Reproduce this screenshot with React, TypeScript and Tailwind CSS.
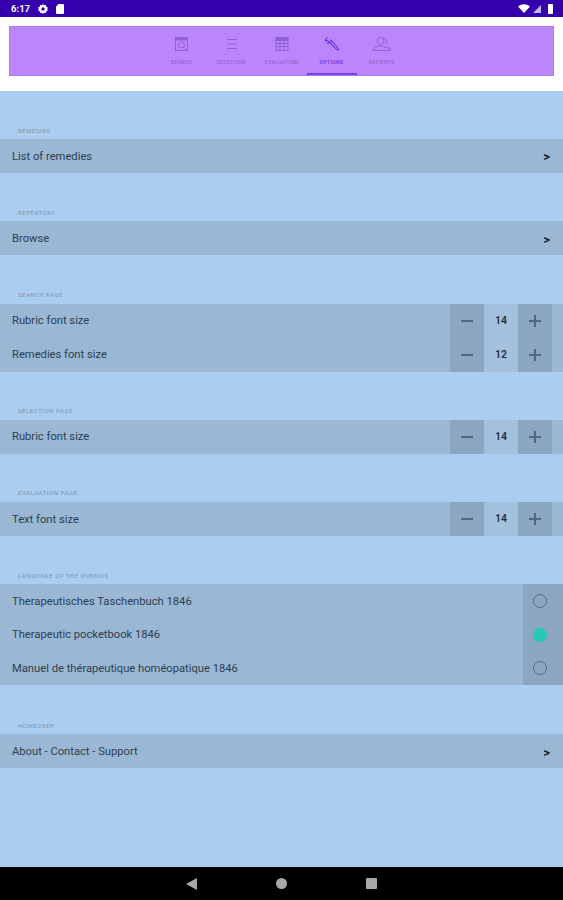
const font = { fontFamily: 'Roboto, "Noto Sans", sans-serif' };

function SearchIcon() {
  return (
    <svg width="18" height="18" viewBox="0 0 18 18" fill="none" stroke="currentColor" strokeWidth="1">
      <rect x="2.500" y="2.500" width="12" height="13" />
      <rect x="2.500" y="2.500" width="12" height="2.500" fill="currentColor" />
      <circle cx="8.500" cy="10" r="3" />
      <path d="M10.800 12.300l3.700 3.700" />
    </svg>
  );
}

function ListIcon() {
  return (
    <svg width="18" height="18" viewBox="0 0 18 18" fill="none" stroke="currentColor" strokeWidth="1">
      <path d="M4 4.500h10M4 9h10M4 13.500h10" />
    </svg>
  );
}

function TableIcon() {
  return (
    <svg width="18" height="18" viewBox="0 0 18 18" fill="none" stroke="currentColor" strokeWidth="1">
      <rect x="3" y="2.500" width="12" height="13" />
      <rect x="3" y="2.500" width="12" height="3" fill="currentColor" />
      <path d="M3 8.500h12M3 11.500h12M7 5.500v10M11 5.500v10" />
    </svg>
  );
}

function WrenchIcon() {
  return (
    <svg width="18" height="18" viewBox="0 0 18 18" fill="none" stroke="currentColor" strokeWidth="1.100">
      <path d="M5 2.500a3 3 0 0 0-2.500 3.600l1.600-.9 1.500 1.500-.9 1.600A3 3 0 0 0 8 5.300l7.300 8a1 1 0 0 1-1.600 1.400L6.600 7.600" />
    </svg>
  );
}

function PatientsIcon() {
  return (
    <svg width="20" height="18" viewBox="0 0 20 18" fill="none" stroke="currentColor" strokeWidth="1">
      <circle cx="8.500" cy="6" r="3.500" />
      <path d="M11 2.800a3.500 3.500 0 0 1 2.500 6.200" />
      <path d="M1.500 15.500c0-3 2.500-4.500 7-4.500 1.500 0 2.500.3 3.500.8l6.500 1.700v2z" />
    </svg>
  );
}

const tabs = [
  { label: 'SEARCH', icon: <SearchIcon /> },
  { label: 'SELECTION', icon: <ListIcon /> },
  { label: 'EVALUATION', icon: <TableIcon /> },
  { label: 'OPTIONS', icon: <WrenchIcon />, active: true },
  { label: 'PATIENTS', icon: <PatientsIcon /> },
];

function StatusBar() {
  return (
    <div className="flex h-[17px] items-center justify-between bg-[#3500ab] pl-[11px] pr-[10px] text-white">
      <div className="flex items-center gap-[8px]">
        <span className="text-[9.500px] font-bold leading-none">6:17</span>
        <svg width="10" height="10" viewBox="0 0 10 10" fill="white">
          <path d="M5 0l1.200 1.300 1.800-.2.300 1.700L10 3.700 9.200 5 10 6.300l-1.700.9-.3 1.700-1.800-.2L5 10 3.800 8.700l-1.800.2-.3-1.700L0 6.300.8 5 0 3.700l1.700-.9.300-1.700 1.800.2z" />
          <circle cx="5" cy="5" r="1.700" fill="#3500ab" />
        </svg>
        <svg width="8" height="10" viewBox="0 0 8 10" fill="white">
          <path d="M2.500 0H7a1 1 0 0 1 1 1v8a1 1 0 0 1-1 1H1a1 1 0 0 1-1-1V2.500z" />
        </svg>
      </div>
      <div className="flex items-center gap-[3px]">
        <svg width="12" height="9" viewBox="0 0 12 9" fill="white">
          <path d="M0 2.500a9 9 0 0 1 12 0L6 9z" />
        </svg>
        <svg width="8" height="8" viewBox="0 0 8 8" fill="white" fillOpacity="0.7">
          <path d="M8 0v8H0z" />
        </svg>
        <div className="ml-[4px] h-[10px] w-[5px] rounded-[1px] bg-white" />
      </div>
    </div>
  );
}

function TopNav() {
  return (
    <div className="bg-white px-[9px] pb-[15px] pt-[9px]">
      <div className="flex h-[50px] justify-center border border-[#ae79f5] bg-[#bb86fc]">
        {tabs.map((tab) => (
          <div
            key={tab.label}
            className={`flex w-[50px] flex-col items-center border-b-2 pt-[8px] ${
              tab.active ? 'border-[#7c3df0] text-[#6a35d8]' : 'border-transparent text-[#8f62d0]'
            }`}
          >
            {tab.icon}
            <span className="mt-[6px] whitespace-nowrap text-[5px] font-medium leading-[6px] tracking-[0.4px]">
              {tab.label}
            </span>
          </div>
        ))}
      </div>
    </div>
  );
}

function SectionLabel({ children }: { children: string }) {
  return (
    <div className="flex h-4 items-center pb-[2px] pl-[18px] text-[6px] uppercase tracking-[0.55px] text-[#7c95b1]">
      {children}
    </div>
  );
}

function LinkRow({ label }: { label: string }) {
  return (
    <div className="flex h-[34px] items-center justify-between bg-[#9ab8d4] pl-[12px] pr-[13px] pt-[2px] text-[11.200px] text-[#2c3e50]">
      <span>{label}</span>
      <span className="text-[13px] font-bold text-[#10202e]">&gt;</span>
    </div>
  );
}

function StepperRow({ label, value }: { label: string; value: number }) {
  return (
    <div className="flex h-[34px] items-center bg-[#9ab8d4] pl-[12px] pr-[11px] text-[11.200px] text-[#2c3e50]">
      <span className="flex-1 pt-[2px]">{label}</span>
      <div className="flex h-full items-center">
        <div className="flex h-full w-[34px] items-center justify-center bg-[#8ba6c1] text-[#55677a]">
          <div className="h-[2px] w-[12px] bg-current" />
        </div>
        <div className="flex h-full w-[34px] items-center justify-center bg-[#a3c0dc] text-[10.500px] font-semibold text-[#1f3042]">
          {value}
        </div>
        <div className="relative flex h-full w-[34px] items-center justify-center bg-[#8ba6c1] text-[#55677a]">
          <div className="h-[2px] w-[12px] bg-current" />
          <div className="absolute h-[12px] w-[2px] bg-current" />
        </div>
      </div>
    </div>
  );
}

function RadioRow({ label, checked }: { label: string; checked?: boolean }) {
  return (
    <div className="flex h-[33.667px] items-center bg-[#9ab8d4] pl-[12px] text-[11.200px] text-[#2c3e50]">
      <span className="flex-1 pt-[2px]">{label}</span>
      <div className="flex h-full w-[40px] items-center justify-start bg-[#8ba6c1] pl-[10px]">
        {checked ? (
          <div className="h-[14px] w-[14px] rounded-full bg-[#26c9b4]" />
        ) : (
          <div className="h-[14px] w-[14px] rounded-full border border-[#5f6b78]" />
        )}
      </div>
    </div>
  );
}

function Section({ label, children }: { label: string; children: React.ReactNode }) {
  return (
    <div className="pt-[32.200px]">
      <SectionLabel>{label}</SectionLabel>
      {children}
    </div>
  );
}

export default function App() {
  return (
    <div className="flex h-[900px] w-[563px] flex-col overflow-hidden bg-[#abcdf0]" style={font}>
      <StatusBar />
      <TopNav />

      <div className="flex-1">
        <Section label="Remedies">
          <LinkRow label="List of remedies" />
        </Section>
        <Section label="Repertory">
          <LinkRow label="Browse" />
        </Section>
        <Section label="Search page">
          <StepperRow label="Rubric font size" value={14} />
          <StepperRow label="Remedies font size" value={12} />
        </Section>
        <Section label="Selection page">
          <StepperRow label="Rubric font size" value={14} />
        </Section>
        <Section label="Evaluation page">
          <StepperRow label="Text font size" value={14} />
        </Section>
        <Section label="Language of the rubrics">
          <RadioRow label="Therapeutisches Taschenbuch 1846" />
          <RadioRow label="Therapeutic pocketbook 1846" checked />
          <RadioRow label="Manuel de thérapeutique homéopatique 1846" />
        </Section>
        <div className="pt-[1px]">
          <Section label="Homeorep">
            <LinkRow label="About - Contact - Support" />
          </Section>
        </div>
      </div>

      <div className="flex h-[33px] items-center justify-center gap-[79px] bg-black">
        <svg width="11" height="12" viewBox="0 0 11 12" fill="#a8a8a8">
          <path d="M11 0v12L0 6z" />
        </svg>
        <div className="h-[11px] w-[11px] rounded-full bg-[#a8a8a8]" />
        <div className="h-[11px] w-[11px] rounded-[1px] bg-[#a8a8a8]" />
      </div>
    </div>
  );
}
